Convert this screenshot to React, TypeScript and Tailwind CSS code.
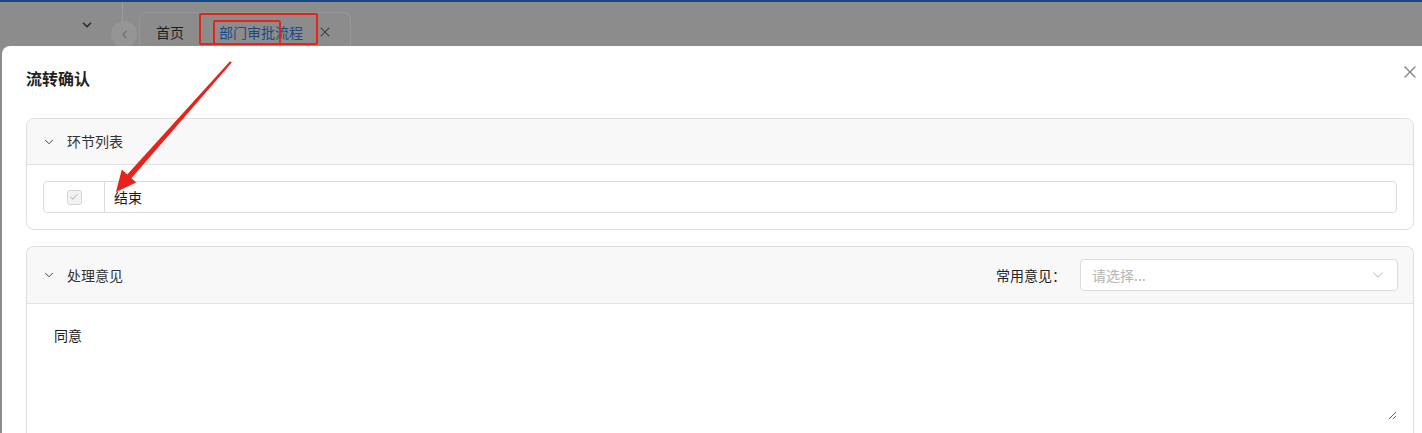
import React from "react";
import { Check, ChevronDown, ChevronLeft, X } from "lucide-react";

const Arrow = () => {
  // red annotation arrow drawn over the page
  return (
    <svg
      className="pointer-events-none absolute left-0 top-0"
      width="1422"
      height="433"
      viewBox="0 0 1422 433"
    >
      <polygon points="230,61.2 231.8,62.6 131.2,178.6 127,174.8" fill="#e8231b" />
      <polygon points="116,192 121.8,169.6 136.2,182.4" fill="#e8231b" />
    </svg>
  );
};

const App = () => {
  return (
    <div className="relative flex h-[433px] w-[1422px] flex-col overflow-hidden bg-[#8c8c8c] font-['Noto_Sans_CJK_SC','Noto_Sans',sans-serif]">
      <div className="h-[2px] shrink-0 bg-[#1b4685]" />

      {/* page behind the mask */}
      <div className="flex h-[44px] shrink-0">
        <div className="pl-[80px] pt-[16px]">
          <ChevronDown size={14} strokeWidth={3} className="text-[#2e2e2e]" />
        </div>
        <div className="ml-[28px] h-[22px] w-px bg-[#9c9c9c]" />
        <div className="-ml-[12px] mt-[19px] flex h-[26px] w-[26px] items-center justify-center rounded-full bg-[#959595]">
          <ChevronLeft size={13} className="text-[#6e6e6e]" />
        </div>
        <div className="ml-[2px] mt-[10px] flex h-[34px] w-[212px] items-start rounded-t-lg border border-b-0 border-[#979797] pl-[16px] pt-[9px] text-[14px] leading-[20px]">
          <span className="text-[#1e1e1e]">首页</span>
          <span className="ml-[35px] text-[#1d4a86]">部门审批流程</span>
          <X size={16} strokeWidth={1.6} className="ml-[14px] mt-[2px] text-[#4a4a4a]" />
        </div>
      </div>

      {/* dialog */}
      <div className="ml-[2px] flex-1 rounded-tl-lg bg-white">
        <div className="flex justify-between pl-[24px] pr-[2px] pt-[20px]">
          <h2 className="text-[16px] font-bold leading-[24px] text-[#1f1f1f]">流转确认</h2>
          <X size={20} strokeWidth={1.5} className="-mt-[4px] text-[#808080]" />
        </div>

        <div className="ml-[24px] mr-[8px] mt-[28px] rounded-lg border border-[#dedede]">
          <div className="flex h-[46px] items-center rounded-t-lg border-b border-[#e2e2e2] bg-[#f8f8f8] pl-[15px] text-[14px] text-[#333]">
            <ChevronDown size={14} strokeWidth={1.7} className="text-[#444]" />
            <span className="ml-[11px]">环节列表</span>
          </div>
          <div className="p-[16px]">
            <div className="flex h-[32px] rounded border border-[#dcdcdc]">
              <div className="flex w-[61px] items-center justify-center border-r border-[#dcdcdc]">
                <div className="flex h-[15px] w-[15px] items-center justify-center rounded-[3px] border border-[#d4d4d4] bg-[#f2f2f2]">
                  <Check size={10} strokeWidth={2.5} className="text-[#b8b8b8]" />
                </div>
              </div>
              <div className="flex items-center pl-[9px] text-[14px] text-[#1a1a1a]">结束</div>
            </div>
          </div>
        </div>

        <div className="ml-[24px] mr-[8px] mt-[16px] rounded-t-lg border border-b-0 border-[#dedede]">
          <div className="flex h-[57px] items-center justify-between rounded-t-lg border-b border-[#e2e2e2] bg-[#f8f8f8] pl-[15px] pr-[15px] text-[14px] text-[#333]">
            <div className="flex items-center">
              <ChevronDown size={14} strokeWidth={1.7} className="text-[#444]" />
              <span className="ml-[11px]">处理意见</span>
            </div>
            <div className="flex items-center">
              <span className="text-[#222]">常用意见：</span>
              <div className="ml-[14px] flex h-[32px] w-[318px] items-center justify-between rounded border border-[#dcdcdc] bg-white pl-[11px] pr-[10px]">
                <span className="text-[#b5b5b5]">请选择...</span>
                <ChevronDown size={18} strokeWidth={1.2} className="text-[#aaa]" />
              </div>
            </div>
          </div>
          <div className="px-[16px] pb-[40px] pt-[16px]">
            <textarea
              defaultValue="同意"
              className="block h-[100px] w-full border-0 px-[11px] pt-[4px] text-[14px] leading-[22px] text-[#1a1a1a] outline-none"
            />
          </div>
        </div>
      </div>

      {/* annotations */}
      <div className="pointer-events-none absolute left-[199px] top-[13px] h-[32px] w-[119px] rounded-[2px] border-2 border-[#e8231b]" />
      <div className="pointer-events-none absolute left-[213px] top-[20px] h-[25px] w-[68px] rounded-[2px] border-2 border-[#e8231b]" />
      <Arrow />
    </div>
  );
};

export default App;
